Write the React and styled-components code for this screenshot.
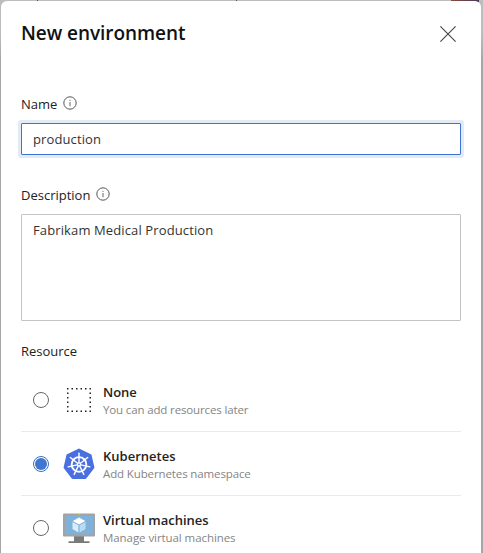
import React from "react";
import styled, { createGlobalStyle } from "styled-components";

const Global = createGlobalStyle`
  * { box-sizing: border-box; }
  html, body { margin: 0; height: 100%; overflow: hidden; }
  body { font-family: "Open Sans", "Noto Sans", sans-serif; color: #222; }
`;

const Backdrop = styled.div`
  height: 553px;
  width: 483px;
  padding: 1px 2px 0 1px;
  overflow: hidden;
  background:
    linear-gradient(90deg, #8a4a3c, #4a3a5c) 451px 0 / 28px 2px no-repeat,
    linear-gradient(#555, #555) 37px 0 / 1px 1px no-repeat,
    linear-gradient(#555, #555) 236px 0 / 1px 1px no-repeat,
    linear-gradient(#bdbdbd 0, #bdbdbd 33px, #a6a6a6 60px, #a6a6a6 100%);
`;

const Panel = styled.section`
  height: 560px;
  padding: 0 20px;
  background: #fff;
  border-radius: 6px 6px 0 0;
`;

const Header = styled.header`
  display: flex;
  justify-content: space-between;
  height: 93px;
  padding-top: 17px;
`;

const Title = styled.h1`
  margin: 0;
  font-size: 19px;
  line-height: 30px;
  font-weight: 600;
  color: #111;
  letter-spacing: -0.06px;
  white-space: nowrap;
`;

const CloseButton = styled.button`
  width: 16px;
  height: 16px;
  margin: 8px 5px 0 0;
  padding: 0;
  border: 0;
  background: none;
  svg { display: block; }
`;

const Label = styled.label`
  display: flex;
  align-items: flex-start;
  height: ${(p) => p.$height}px;
  font-size: 13px;
  line-height: 20px;
  svg { margin: 1.5px 0 0 5.6px; }
`;

const Input = styled.input`
  display: block;
  width: 440px;
  height: 32px;
  margin-bottom: 30px;
  padding: 0 11px 1px;
  border: 1px solid #3b76d6;
  border-radius: 1px;
  outline: 0;
  box-shadow: 0 0 0 3px #e3ebf7;
  font: 13px/20px "Open Sans", "Noto Sans", sans-serif;
  letter-spacing: 0.12px;
  color: #333;
`;

const TextArea = styled.textarea`
  display: block;
  width: 440px;
  height: 107px;
  margin-bottom: 20px;
  padding: 5px 11px;
  border: 1px solid #c4c4c4;
  border-radius: 1px;
  resize: none;
  font: 13px/20px "Open Sans", "Noto Sans", sans-serif;
  letter-spacing: 0.12px;
  color: #333;
`;

const Options = styled.div`
  display: flex;
  flex-direction: column;
`;

const Option = styled.div`
  display: flex;
  align-items: center;
  height: 64px;
  padding-left: 12px;
  border-bottom: 1px solid #eaeaea;
`;

const Radio = styled.span`
  display: grid;
  place-items: center;
  width: 16px;
  height: 16px;
  margin-right: 14px;
  border: 1px solid ${(p) => (p.$checked ? "#3672c9" : "#666")};
  border-radius: 50%;
  &::after {
    content: "";
    width: 12px;
    height: 12px;
    border-radius: 50%;
    background: ${(p) => (p.$checked ? "#4077ce" : "transparent")};
  }
`;

const OptionIcon = styled.span`
  width: 32px;
  height: 32px;
  margin-right: 8px;
  svg { display: block; }
`;

const OptionText = styled.div`
  display: flex;
  flex-direction: column;
  height: 37px;
  padding-top: 3px;
  white-space: nowrap;
`;

const OptionName = styled.span`
  font-size: 13px;
  line-height: 17px;
  font-weight: 600;
`;

const OptionHint = styled.span`
  font-size: 11.5px;
  line-height: 17px;
  color: #858585;
  letter-spacing: ${(p) => p.$spacing}px;
`;

const InfoIcon = () => (
  <svg width="14" height="14" viewBox="0 0 14 14" fill="none" stroke="#555">
    <circle cx="7" cy="7" r="6.2" />
    <path d="M7 6v4.2M7 3.8v1.1" stroke="#666" />
  </svg>
);

const CloseIcon = () => (
  <svg width="16" height="16" viewBox="0 0 16 16" stroke="#444" strokeWidth="1.1">
    <path d="M.4.4 15.6 15.6M15.6.4.4 15.6" />
  </svg>
);

const dots = [];
for (let i = 0; i < 6; i += 1) {
  const p = 4 + i * 4.5;
  dots.push([p, 4], [p, 26.5]);
  if (i > 0 && i < 5) dots.push([4, p], [26.5, p]);
}

const NoneIcon = () => (
  <svg width="32" height="32" viewBox="0 0 32 32" fill="#222">
    {dots.map(([x, y]) => (
      <rect key={`${x}-${y}`} x={x} y={y} width="1.5" height="1.5" />
    ))}
  </svg>
);

const spokes = Array.from({ length: 7 }, (_, i) => (i * 360) / 7);

const KubernetesIcon = () => (
  <svg width="32" height="32" viewBox="0 0 32 32">
    <path
      d="M16 1.8 27.4 7.3 30.2 19.6 22.3 29.7H9.7L1.8 19.6 4.6 7.3Z"
      fill="#4a6fe0"
      stroke="#4a6fe0"
      strokeWidth="2.4"
      strokeLinejoin="round"
    />
    <g fill="none" stroke="#fff">
      <circle cx="16" cy="16.4" r="7.3" strokeWidth="1.9" />
      {spokes.map((a) => (
        <path key={a} d="M16 14.5V5.3" strokeWidth="1.4" strokeLinecap="round" transform={`rotate(${a} 16 16.4)`} />
      ))}
    </g>
    <circle cx="16" cy="16.4" r="2.1" fill="#fff" />
    <circle cx="16" cy="16.4" r=".8" fill="#4a6fe0" />
  </svg>
);

const MachineIcon = () => (
  <svg width="32" height="32" viewBox="0 0 32 32">
    <path d="M11 23h10v6.2h5.5V31h-21v-1.8H11Z" fill="#7a7a7a" />
    <rect x="0" y="1.4" width="32" height="23.2" rx="1" fill="#a3a3a3" />
    <rect x="2" y="3.4" width="28" height="19" fill="#7fb2da" />
    <circle cx="16" cy="2.5" r=".8" fill="#b7d332" />
    <path d="m16 5.6 6.3 3.5L16 12.6 9.7 9.1Z" fill="#fff" />
    <path d="m9.5 10 5.9 3.3v7.1l-5.9-3.5Z" fill="#d9edf9" />
    <path d="m22.5 10-5.9 3.3v7.1l5.9-3.5Z" fill="#b9dcf3" />
  </svg>
);

const resources = [
  { name: "None", hint: "You can add resources later", Icon: NoneIcon, hintSpacing: -0.14 },
  { name: "Kubernetes", hint: "Add Kubernetes namespace", Icon: KubernetesIcon, hintSpacing: -0.12 },
  { name: "Virtual machines", hint: "Manage virtual machines", Icon: MachineIcon, hintSpacing: -0.07 },
];

const selected = "Kubernetes";

export default function App() {
  return (
    <>
      <Global />
      <Backdrop>
        <Panel>
          <Header>
            <Title>New environment</Title>
            <CloseButton aria-label="Close"><CloseIcon /></CloseButton>
          </Header>
          <Label $height={29}>Name <InfoIcon /></Label>
          <Input defaultValue="production" />
          <Label $height={29}>Description <InfoIcon /></Label>
          <TextArea defaultValue="Fabrikam Medical Production" spellCheck={false} />
          <Label as="div" $height={27}>Resource</Label>
          <Options>
            {resources.map(({ name, hint, Icon, hintSpacing }) => (
              <Option key={name}>
                <Radio role="radio" aria-checked={name === selected} $checked={name === selected} />
                <OptionIcon><Icon /></OptionIcon>
                <OptionText>
                  <OptionName>{name}</OptionName>
                  <OptionHint $spacing={hintSpacing}>{hint}</OptionHint>
                </OptionText>
              </Option>
            ))}
          </Options>
        </Panel>
      </Backdrop>
    </>
  );
}
